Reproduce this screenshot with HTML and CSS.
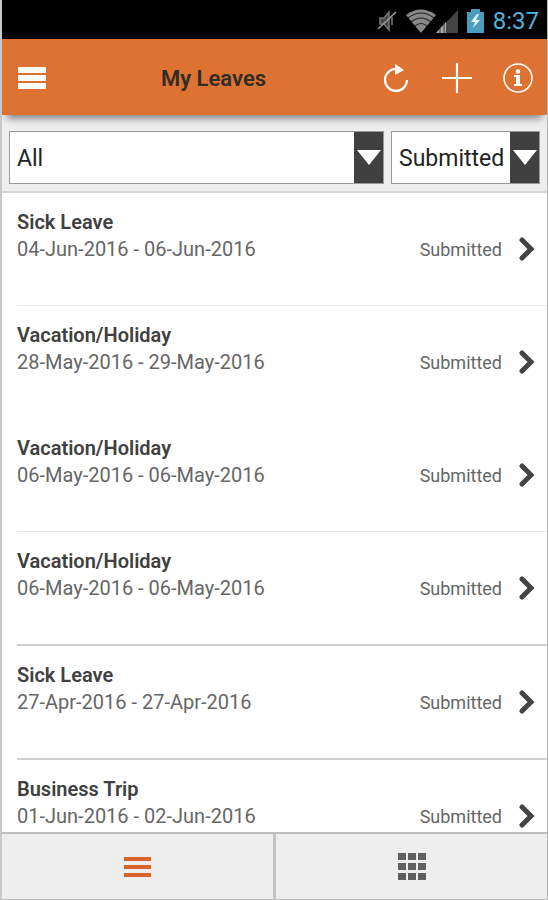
FILE: index.html
```html
<!DOCTYPE html>
<html lang="en">

<head>
    <meta charset="UTF-8" />
    <meta name="viewport" content="width=device-width, initial-scale=1.0" />
    <title>My Leaves</title>
    <link rel="stylesheet" href="styles.css">
</head>

<body>

    <div class="status-bar">
        <svg class="status-icon" width="20" height="24" viewBox="0 0 20 24" fill="none">
            <path d="M3 9h4l5-6v18l-5-6H3z" fill="#444" stroke="#777" stroke-width="1.500" />
            <path d="M15 8v8" stroke="#777" stroke-width="1.500" />
            <path d="M1 20L19 3" stroke="#999" stroke-width="1.500" />
        </svg>
        <svg class="status-icon wifi" width="30" height="24" viewBox="0 0 30 24">
            <path d="M0 6Q15-5 30 6L15 24z" fill="#888" />
            <path d="M2 9Q15-1 28 9M5 13Q15 5 25 13M9 17Q15 12 21 17" fill="none" stroke="#222" stroke-width="1.200" />
        </svg>
        <svg class="status-icon" width="22" height="24" viewBox="0 0 22 24">
            <path d="M22 1v23H0z" fill="#444" />
            <path d="M10 13v11H0z" fill="#aaa" />
            <path d="M4 17v7M8 13v11" stroke="#333" />
        </svg>
        <svg class="status-icon battery" width="17" height="24" viewBox="0 0 17 24">
            <path d="M4 0h9v3h4v21H0V3h4z" fill="#4a9dbf" />
            <path d="M10 5L4 13h4l-2 6 7-8H9l3-6z" fill="#e8f5fa" />
        </svg>
        <time class="clock">8:37</time>
    </div>

    <header class="navbar">
        <button class="icon-btn" type="button" aria-label="Menu">
            <svg width="28" height="24" viewBox="0 0 28 24" fill="#fff">
                <rect y="1" width="28" height="6" rx="1" />
                <rect y="9" width="28" height="6" rx="1" />
                <rect y="17" width="28" height="6" rx="1" />
            </svg>
        </button>
        <h1>My Leaves</h1>
        <div class="actions">
            <button class="icon-btn" type="button" aria-label="Refresh">
                <svg width="30" height="30" viewBox="0 0 30 30">
                    <path d="M16 6A11 11 0 1 0 26 17" fill="none" stroke="#fff" stroke-width="2.200" />
                    <path d="M14 1l9 6-9 5z" fill="#fff" />
                </svg>
            </button>
            <button class="icon-btn" type="button" aria-label="Add leave">
                <svg width="30" height="30" viewBox="0 0 30 30" stroke="#fff" stroke-width="2.200">
                    <path d="M15 0v30M0 15h30" />
                </svg>
            </button>
            <button class="icon-btn" type="button" aria-label="Info">
                <svg width="30" height="30" viewBox="0 0 30 30">
                    <circle cx="15" cy="15" r="14" fill="none" stroke="#fff" stroke-width="1.500" />
                    <circle cx="15" cy="8.500" r="2.300" fill="#fff" />
                    <path d="M11 12h6v9h2v2h-8v-2h2v-7h-2z" fill="#fff" />
                </svg>
            </button>
        </div>
    </header>

    <form class="filters">
        <div class="select-box type">
            <select aria-label="Leave type">
                <option>All</option>
                <option>Sick Leave</option>
                <option>Vacation/Holiday</option>
                <option>Business Trip</option>
            </select>
            <span class="arrow"></span>
        </div>
        <div class="select-box">
            <select aria-label="Leave status">
                <option>Submitted</option>
            </select>
            <span class="arrow"></span>
        </div>
    </form>

    <main class="leaves">
        <ul id="leave-list"></ul>
    </main>

    <nav class="tabs">
        <button type="button" aria-label="List view">
            <svg width="27" height="22" viewBox="0 0 27 22" fill="#d9622b">
                <rect y="1" width="27" height="4" />
                <rect y="9" width="27" height="4" />
                <rect y="17" width="27" height="4" />
            </svg>
        </button>
        <button type="button" aria-label="Grid view">
            <svg width="28" height="28" viewBox="0 0 28 28" fill="#606060">
                <path d="M0 0h8v7H0zM10 0h8v7h-8zM20 0h8v7h-8zM0 10h8v7H0zM10 10h8v7h-8zM20 10h8v7h-8zM0 20h8v7H0zM10 20h8v7h-8zM20 20h8v7h-8z" />
            </svg>
        </button>
    </nav>

    <script>
        const leaves = [
            { type: "Sick Leave", from: "04-Jun-2016", to: "06-Jun-2016", line: "light" },
            { type: "Vacation/Holiday", from: "28-May-2016", to: "29-May-2016", line: "none" },
            { type: "Vacation/Holiday", from: "06-May-2016", to: "06-May-2016", line: "light" },
            { type: "Vacation/Holiday", from: "06-May-2016", to: "06-May-2016", line: "dark" },
            { type: "Sick Leave", from: "27-Apr-2016", to: "27-Apr-2016", line: "dark" },
            { type: "Business Trip", from: "01-Jun-2016", to: "02-Jun-2016", line: "light" }
        ];

        const list = document.getElementById("leave-list");
        leaves.forEach((leave) => {
            const item = document.createElement("li");
            item.className = "leave " + leave.line;
            item.innerHTML = `
        <a href="#">
            <div class="details">
                <h2>${leave.type}</h2>
                <p>${leave.from} - ${leave.to}</p>
            </div>
            <span class="state">Submitted</span>
            <svg class="chevron" width="16" height="24" viewBox="0 0 16 24">
                <path d="M3 3l9 9-9 9" fill="none" stroke="#444" stroke-width="5" stroke-linecap="round" />
            </svg>
        </a>
      `;
            list.appendChild(item);
        });
    </script>

</body>

</html>
```
FILE: styles.css
```css
:root {
    --orange: #dd7233;
    --panel: #eeeeee;
    --line: #c4c4c4;
    --dark: #404040;
}

* {
    margin: 0;
    padding: 0;
    box-sizing: border-box;
    font-family: Roboto, sans-serif;
}

body {
    height: 100vh;
    display: flex;
    flex-direction: column;
    background: #fff;
    border-left: 2px solid #c8c8c8;
    border-right: 1px solid #b4b4b4;
    overflow: hidden;
}

button {
    background: none;
    border: none;
    cursor: pointer;
}

svg {
    display: block;
}

.status-bar {
    height: 39px;
    flex-shrink: 0;
    padding: 3px 8px 0 0;
    background: #000;
    display: flex;
    justify-content: flex-end;
    align-items: center;
}

.status-icon {
    margin-right: 9px;
}

.status-icon.wifi {
    margin-right: 0;
}

.clock {
    color: #4fb3dc;
    font-size: 24px;
    line-height: 32px;
}

.navbar {
    height: 76px;
    flex-shrink: 0;
    padding: 2px 14px 0 16px;
    background: var(--orange);
    box-shadow: 0 8px 8px -5px rgba(0, 0, 0, 0.5);
    display: flex;
    justify-content: space-between;
    align-items: center;
    position: relative;
    z-index: 2;
}

.navbar h1 {
    color: #302c26;
    font-size: 22px;
    font-weight: 600;
}

.actions {
    display: flex;
    gap: 31px;
}

.filters {
    flex-shrink: 0;
    padding: 16px 7px 7px;
    background: var(--panel);
    border-bottom: 2px solid #d4d4d4;
    display: flex;
    gap: 7px;
}

.select-box {
    height: 53px;
    width: 149px;
    background: #fff;
    border: 1px solid #999;
    display: flex;
    position: relative;
}

.select-box.type {
    width: auto;
    flex: 1;
}

.select-box select {
    width: 100%;
    padding: 2px 32px 0 7px;
    appearance: none;
    background: none;
    border: none;
    color: #222;
    font-size: 23px;
}

.arrow {
    position: absolute;
    top: 0;
    right: 0;
    bottom: 0;
    width: 29px;
    background: var(--dark);
    pointer-events: none;
    display: flex;
    justify-content: center;
    align-items: center;
}

.arrow::before {
    content: "";
    border: 12px solid transparent;
    border-top: 15px solid #fff;
    border-bottom: none;
}

.leaves {
    flex: 1;
    min-height: 0;
    overflow: hidden;
}

.leaves ul {
    list-style: none;
    padding-left: 15px;
}

.leave {
    border-bottom: 1px solid #e9e9e9;
}

.leave.none {
    border-color: transparent;
}

.leave.dark {
    border-bottom: 2px solid #cfcfcf;
}

.leave a {
    height: 112px;
    padding: 16px 12px 0 0;
    color: #666;
    text-decoration: none;
    display: flex;
    align-items: flex-start;
}

.details {
    flex: 1;
}

.details h2 {
    color: #404040;
    font-size: 20px;
    font-weight: 600;
    line-height: 27px;
}

.details p {
    font-size: 20px;
    line-height: 26px;
}

.state {
    margin-top: 27px;
    font-size: 18px;
    line-height: 27px;
}

.chevron {
    margin: 28px 0 0 17px;
}

.tabs {
    height: 68px;
    flex-shrink: 0;
    background: var(--line);
    border-top: 2px solid #bdbdbd;
    border-bottom: 1px solid #bdbdbd;
    display: flex;
    gap: 3px;
}

.tabs button {
    flex: 1;
    background: var(--panel);
    display: flex;
    justify-content: center;
    align-items: center;
}
```
